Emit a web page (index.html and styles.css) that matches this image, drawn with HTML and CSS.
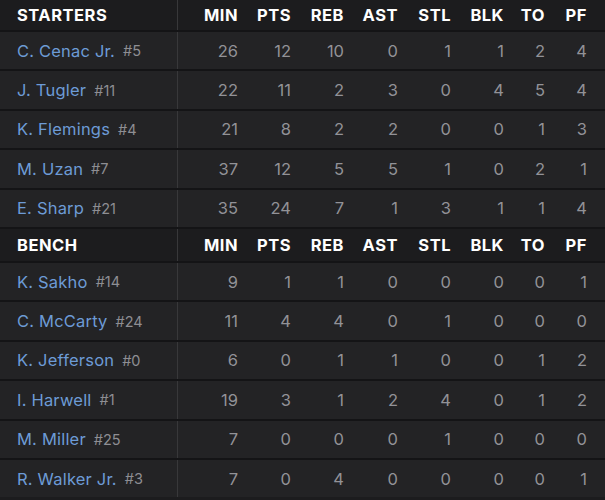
FILE: index.html
```html
<!DOCTYPE html>
<html>
<head>
<meta charset="utf-8">
<link rel="stylesheet" href="styles.css">
</head>
<body>
<div class="box">
  <div class="row head first">
    <div class="name">STARTERS</div><div>MIN</div><div>PTS</div><div>REB</div><div>AST</div><div>STL</div><div>BLK</div><div>TO</div><div>PF</div>
  </div>
  <div class="row"><div class="name"><span class="pl">C. Cenac Jr.</span><span class="no">#5</span></div><div>26</div><div>12</div><div>10</div><div>0</div><div>1</div><div>1</div><div>2</div><div>4</div></div>
  <div class="row"><div class="name"><span class="pl">J. Tugler</span><span class="no">#11</span></div><div>22</div><div>11</div><div>2</div><div>3</div><div>0</div><div>4</div><div>5</div><div>4</div></div>
  <div class="row"><div class="name"><span class="pl">K. Flemings</span><span class="no">#4</span></div><div>21</div><div>8</div><div>2</div><div>2</div><div>0</div><div>0</div><div>1</div><div>3</div></div>
  <div class="row"><div class="name"><span class="pl">M. Uzan</span><span class="no">#7</span></div><div>37</div><div>12</div><div>5</div><div>5</div><div>1</div><div>0</div><div>2</div><div>1</div></div>
  <div class="row"><div class="name"><span class="pl">E. Sharp</span><span class="no">#21</span></div><div>35</div><div>24</div><div>7</div><div>1</div><div>3</div><div>1</div><div>1</div><div>4</div></div>
  <div class="row head bench">
    <div class="name">BENCH</div><div>MIN</div><div>PTS</div><div>REB</div><div>AST</div><div>STL</div><div>BLK</div><div>TO</div><div>PF</div>
  </div>
  <div class="row"><div class="name"><span class="pl">K. Sakho</span><span class="no">#14</span></div><div>9</div><div>1</div><div>1</div><div>0</div><div>0</div><div>0</div><div>0</div><div>1</div></div>
  <div class="row"><div class="name"><span class="pl">C. McCarty</span><span class="no">#24</span></div><div>11</div><div>4</div><div>4</div><div>0</div><div>1</div><div>0</div><div>0</div><div>0</div></div>
  <div class="row"><div class="name"><span class="pl">K. Jefferson</span><span class="no">#0</span></div><div>6</div><div>0</div><div>1</div><div>1</div><div>0</div><div>0</div><div>1</div><div>2</div></div>
  <div class="row"><div class="name"><span class="pl">I. Harwell</span><span class="no">#1</span></div><div>19</div><div>3</div><div>1</div><div>2</div><div>4</div><div>0</div><div>1</div><div>2</div></div>
  <div class="row"><div class="name"><span class="pl">M. Miller</span><span class="no">#25</span></div><div>7</div><div>0</div><div>0</div><div>0</div><div>1</div><div>0</div><div>0</div><div>0</div></div>
  <div class="row"><div class="name"><span class="pl">R. Walker Jr.</span><span class="no">#3</span></div><div>7</div><div>0</div><div>4</div><div>0</div><div>0</div><div>0</div><div>0</div><div>1</div></div>
</div>
</body>
</html>
```
FILE: styles.css
```css
html, body {
  margin: 0;
  padding: 0;
  background: #1c1c1e;
}
.box {
  width: 605px;
  font-family: Inter, "Noto Sans", sans-serif;
}
.row {
  display: grid;
  grid-template-columns: 178px 60px 53px 53px 54px 53px 53px 41px 42px;
  padding-right: 18px;
  height: 39.4px;
  box-sizing: border-box;
  border-top: 2px solid #141416;
  background: #232325;
  align-items: center;
  color: #929297;
  font-size: 16.5px;
}
.row > div {
  height: 100%;
  display: flex;
  align-items: center;
  justify-content: flex-end;
}
.row > .name {
  justify-content: flex-start;
  padding-left: 17px;
  border-right: 1px solid #38383a;
  box-sizing: border-box;
}
.head {
  background: #1c1c1e;
  color: #ffffff;
  font-weight: 700;
  font-size: 16.5px;
  letter-spacing: 0.5px;
}
.first {
  border-top: none;
  height: 30px;
}
.bench {
  height: 34px;
}
.pl {
  color: #6d9bd6;
  letter-spacing: 0.2px;
}
.no {
  color: #8e8e93;
  font-size: 14.5px;
  margin-left: 8px;
}
```
